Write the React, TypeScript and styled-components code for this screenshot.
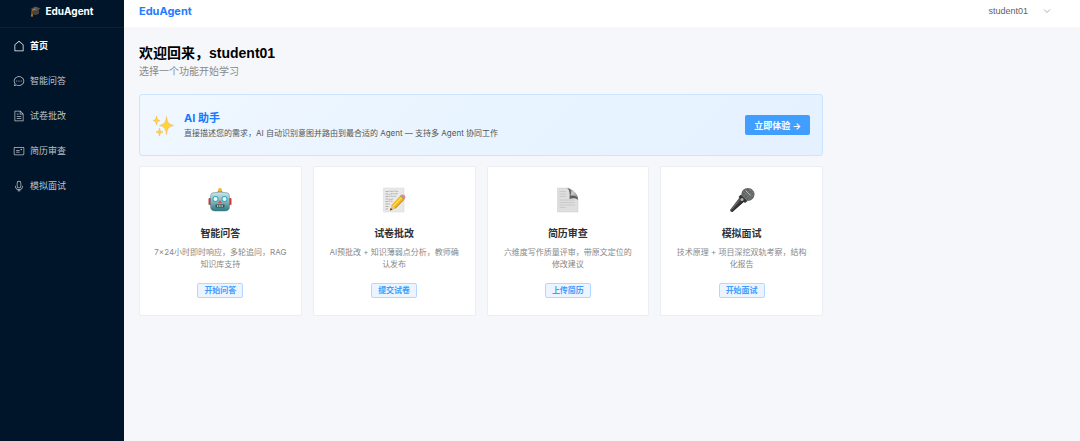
import React from "react";
import styled, { createGlobalStyle, css } from "styled-components";

const GlobalStyle = createGlobalStyle`
  * { box-sizing: border-box; }
  body {
    margin: 0;
    background: #f5f7fa;
    color: #303133;
    font-family: "Liberation Sans", "Noto Sans CJK SC", sans-serif;
  }
  h1, h2, h3, p, ul { margin: 0; padding: 0; }
  button { font-family: inherit; cursor: pointer; }
`;

const interFont = css`
  font-family: Inter, "Noto Sans CJK SC", sans-serif;
`;

const Shell = styled.div`
  display: flex;
  min-height: 100vh;
`;

const Sidebar = styled.aside`
  flex: 0 0 124px;
  background: #001529;
`;

const Logo = styled.div`
  ${interFont}
  display: flex;
  align-items: center;
  justify-content: center;
  gap: 4px;
  height: 28px;
  padding-bottom: 5px;
  border-bottom: 1px solid #0d2133;
  color: #fff;
  font-size: 10px;
  font-weight: 700;
`;

const Menu = styled.ul`
  list-style: none;
`;

const MenuLink = styled.a<{ $active?: boolean }>`
  display: flex;
  align-items: center;
  gap: 5px;
  height: 35px;
  padding: 0 13px;
  color: #bcc4cc;
  font-size: 9px;
  text-decoration: none;
  ${(p) =>
    p.$active &&
    css`
      color: #fff;
      font-weight: 700;
    `}
`;

const MenuIcon = styled.svg`
  width: 12px;
  height: 12px;
  fill: currentColor;
`;

const Body = styled.div`
  flex: 1;
  min-width: 0;
`;

const Header = styled.header`
  display: flex;
  align-items: center;
  justify-content: space-between;
  height: 27px;
  padding: 0 29px 6px 15px;
  background: #fff;
`;

const Brand = styled.strong`
  ${interFont}
  color: #1f7bff;
  font-size: 11px;
`;

const UserButton = styled.button`
  display: flex;
  align-items: center;
  gap: 15px;
  padding: 0;
  border: 0;
  background: none;
  color: #606266;
  font-size: 9px;
`;

const Main = styled.main`
  max-width: 714px;
  padding: 16px 15px;
`;

const Welcome = styled.h1`
  color: #000;
  font-size: 14px;
  line-height: 20px;
`;

const Hint = styled.p`
  margin-bottom: 13px;
  color: #888;
  font-size: 10px;
  line-height: 18px;
`;

const Banner = styled.section`
  display: flex;
  align-items: center;
  gap: 9px;
  height: 62px;
  margin-bottom: 10px;
  padding: 0 12px;
  border: 1px solid #c9e5ff;
  border-radius: 3px;
  background: linear-gradient(135deg, #f0f7ff 0%, #e8f4ff 50%, #e5f1ff 100%);
`;

const BannerText = styled.div`
  ${interFont}
  flex: 1;
`;

const BannerTitle = styled.h2`
  color: #1677ff;
  font-size: 11px;
  line-height: 16px;
`;

const BannerDesc = styled.p`
  color: #555;
  font-size: 8px;
  line-height: 15px;
`;

const PrimaryButton = styled.button`
  && {
    ${interFont}
  }
  height: 20px;
  padding: 0 9px;
  border: 0;
  border-radius: 2px;
  background: #409eff;
  color: #fff;
  font-size: 9px;
  font-weight: 700;
`;

const Grid = styled.div`
  display: grid;
  grid-template-columns: repeat(4, 1fr);
  gap: 11px;
`;

const Card = styled.article`
  display: flex;
  flex-direction: column;
  align-items: center;
  padding: 20px 12px 17px;
  border: 1px solid #ebeef5;
  border-radius: 2px;
  background: #fff;
  text-align: center;
`;

const CardTitle = styled.h3`
  margin: 13px 0 4px;
  font-size: 10px;
  line-height: 16px;
`;

const CardDesc = styled.p`
  ${interFont}
  max-width: 135px;
  margin-bottom: 13px;
  color: #888;
  font-size: 8px;
  line-height: 12px;
`;

const TagButton = styled.button`
  height: 15px;
  padding: 0 6px;
  border: 1px solid #b3d8ff;
  border-radius: 2px;
  background: #ecf5ff;
  color: #409eff;
  font-size: 8px;
  font-weight: 700;
  line-height: 13px;
`;

const HOUSE =
  "M192 413.952V896h640V413.952L512 147.328zM139.52 374.4l352-293.312a32 32 0 0 1 40.96 0l352 293.312A32 32 0 0 1 896 398.976V928a32 32 0 0 1-32 32H160a32 32 0 0 1-32-32V398.976a32 32 0 0 1 11.52-24.576";
const CHAT =
  "m174.72 855.68 135.296-45.12 23.68 11.84C388.096 849.536 448.576 864 512 864c211.84 0 384-166.784 384-352S723.84 160 512 160 128 326.784 128 512c0 69.12 24.96 139.264 70.848 199.232l22.08 28.8-46.272 115.584zm-45.248 82.56A32 32 0 0 1 89.6 896l58.368-145.92C94.72 680.32 64 596.864 64 512 64 299.904 256 96 512 96s448 203.904 448 416-192 416-448 416a461.056 461.056 0 0 1-206.912-48.384zM512 563.2a51.2 51.2 0 1 1 0-102.4 51.2 51.2 0 0 1 0 102.4m192 0a51.2 51.2 0 1 1 0-102.4 51.2 51.2 0 0 1 0 102.4m-384 0a51.2 51.2 0 1 1 0-102.4 51.2 51.2 0 0 1 0 102.4";
const DOCUMENT =
  "M832 384H576V128H192v768h640zm-26.496-64L640 154.496V320zM160 64h480l256 256v608a32 32 0 0 1-32 32H160a32 32 0 0 1-32-32V96a32 32 0 0 1 32-32m160 448h384v64H320zm0-192h160v64H320zm0 384h384v64H320z";
const POSTCARD =
  "M160 224a32 32 0 0 0-32 32v512a32 32 0 0 0 32 32h704a32 32 0 0 0 32-32V256a32 32 0 0 0-32-32zm0-64h704a96 96 0 0 1 96 96v512a96 96 0 0 1-96 96H160a96 96 0 0 1-96-96V256a96 96 0 0 1 96-96M704 320a64 64 0 1 1 0 128 64 64 0 0 1 0-128M288 448h256q32 0 32 32t-32 32H288q-32 0-32-32t32-32m0 128h256q32 0 32 32t-32 32H288q-32 0-32-32t32-32";
const MICROPHONE =
  "M512 128a128 128 0 0 0-128 128v256a128 128 0 1 0 256 0V256a128 128 0 0 0-128-128m0-64a192 192 0 0 1 192 192v256a192 192 0 1 1-384 0V256A192 192 0 0 1 512 64m-32 832v-64a288 288 0 0 1-288-288v-32a32 32 0 0 1 64 0v32a224 224 0 0 0 224 224h64a224 224 0 0 0 224-224v-32a32 32 0 1 1 64 0v32a288 288 0 0 1-288 288v64h64a32 32 0 1 1 0 64H416a32 32 0 1 1 0-64z";

const GraduationCap = () => (
  <svg width="11" height="12" viewBox="0 0 22 24" aria-hidden="true">
    <path d="M6 11v7c3 3 9 2 12-1v-7z" fill="#4a4543" />
    <path d="M1 8 11 3l10 4-9 7z" fill="#5b5452" />
    <path d="m1 8 11 6 9-7" fill="none" stroke="#2d2a2b" strokeWidth="1" />
    <path d="M11 8 4 11v8" fill="none" stroke="#e09a2d" strokeWidth="1.6" />
    <path d="m3 18-1 5h4l-1-5z" fill="#d98d24" />
  </svg>
);

const Sparkles = () => (
  <svg width="23" height="23" viewBox="0 0 46 46" aria-hidden="true">
    <g fill="#ffd43b" stroke="#f5b14c" strokeWidth="1" strokeLinejoin="round">
      <path d="M29 5c1.500 12 4 15 14 18-10 2-12.500 6-14 18-1.500-12-4-16-14-18 10-3 12.500-6 14-18z" />
      <path d="M9 4c.8 6 2 8 7 9-5 1.500-6.200 3-7 9-.8-6-2-7.500-7-9 5-1 6.200-3 7-9z" />
      <path d="M15 28c.8 5 2 7 7 8-5 1.500-6.200 3-7 8-.8-5-2-6.500-7-8 5-1 6.200-3 7-8z" />
    </g>
  </svg>
);

const Robot = () => (
  <svg width="26" height="26" viewBox="0 0 52 52" aria-hidden="true">
    <defs>
      <linearGradient id="robot-face" x1="0" y1="0" x2="0" y2="1">
        <stop offset="0" stopColor="#d3e6e4" />
        <stop offset=".5" stopColor="#86b5b8" />
        <stop offset="1" stopColor="#2d7681" />
      </linearGradient>
    </defs>
    <rect x="3" y="22" width="6" height="14" rx="2" fill="#c63f3e" />
    <rect x="43" y="22" width="6" height="14" rx="2" fill="#c63f3e" />
    <path d="M20 12c0-3 3-4 6-4s6 1 6 4z" fill="#735daa" />
    <circle cx="26" cy="6" r="4" fill="#f5b730" />
    <path d="M10 12q16-4 32 0 3 2 3 9v18q0 9-9 9H16q-9 0-9-9V21q0-7 3-9z" fill="url(#robot-face)" stroke="#498188" />
    <circle cx="17" cy="24" r="6" fill="#2ba9c9" />
    <circle cx="35" cy="24" r="6" fill="#2ba9c9" />
    <circle cx="17" cy="24" r="4" fill="#e9ffff" />
    <circle cx="35" cy="24" r="4" fill="#e9ffff" />
    <path d="m26 26 4 6h-8z" fill="#e2523f" />
    <rect x="17" y="35" width="18" height="6" rx="2" fill="#334d55" />
    <path d="M20 38h12" stroke="#e7eded" strokeWidth="3" strokeDasharray="2 1.500" />
  </svg>
);

const Memo = () => (
  <svg width="26" height="26" viewBox="0 0 52 52" aria-hidden="true">
    <path d="M5 2h41v48H5z" fill="#e9e9e9" stroke="#d6d6d6" />
    <path
      d="M9 9h7l2-1 4 1 5-1 8 1M9 14h5l2 1 7-2 3 1 7-1M9 19h8l3-1 5 1 6-1M9 24h6l3 1 7-1M9 29h5l2-1 7 1M9 34h10M9 39h7M9 44h6"
      fill="none"
      stroke="#999"
      strokeWidth="1.400"
      strokeDasharray="5 1 3 1"
    />
    <path d="m18 47 4-12L39 17l8 7-18 19z" fill="#f1b71d" />
    <path d="m25 38 17-18" stroke="#ffdc52" strokeWidth="3" />
    <path d="m28 43 18-18" stroke="#c88413" strokeWidth="2" />
    <path d="m18 47 4-12 7 8z" fill="#e6c28f" />
    <path d="m18 47 1.500-5 3.500 3z" fill="#333" />
    <path d="m38 18 2-2 8 7-2 2z" fill="#8d9698" />
    <path d="m40 16 2-1q6-1 7 6l-1 2z" fill="#ef8290" />
  </svg>
);

const Page = () => (
  <svg width="26" height="26" viewBox="0 0 52 52" aria-hidden="true">
    <defs>
      <linearGradient id="page-curl" x1="0" y1="0" x2="1" y2="1">
        <stop offset="0" stopColor="#777" />
        <stop offset=".4" stopColor="#ccc" />
        <stop offset="1" stopColor="#777" />
      </linearGradient>
    </defs>
    <path d="M5 2h23l18 22v26H5z" fill="#dedede" stroke="#cfcfcf" />
    <path d="M23 2c7 2 7 14 6 22 6-2 14-2 17 2 1-9-11-22-23-24z" fill="#5c5c5c" />
    <path d="M29 3c4 4 3 9 2 14 6-1 12 1 15 6 0-8-9-17-17-20z" fill="url(#page-curl)" />
    <path d="M9 9h13M9 14h14M9 19h14M9 26h30M9 31h30M9 36h31M9 41h12" stroke="#c3c3c3" strokeWidth="1.500" />
  </svg>
);

const Mic = () => (
  <svg width="26" height="26" viewBox="0 0 52 52" aria-hidden="true">
    <defs>
      <linearGradient id="mic-body" x1="0" y1="0" x2="1" y2="1">
        <stop offset=".3" stopColor="#686868" />
        <stop offset=".6" stopColor="#262626" />
      </linearGradient>
    </defs>
    <path d="M2 46 24 17l10 9L7 50q-4 1-5-4z" fill="url(#mic-body)" />
    <path d="m24 15 13 13-5 4-13-12z" fill="#343434" />
    <path d="M25 16C24 8 30 2 38 2c7 0 13 6 13 12 0 8-6 14-14 14z" fill="#626566" />
    <path d="m29 9 14 14M34 5l13 13M40 3l9 9M29 19 44 4M33 23 49 9M38 26 50 15" stroke="#898c8d" strokeWidth="1" />
    <path d="m33 7 10 10" stroke="#b8b8b8" strokeWidth="2" />
    <circle cx="26" cy="25" r="3" fill="#b4b4b4" />
    <path d="M5 45 20 27" stroke="#747474" strokeWidth="2" />
  </svg>
);

const menu = [
  { label: "首页", path: HOUSE },
  { label: "智能问答", path: CHAT },
  { label: "试卷批改", path: DOCUMENT },
  { label: "简历审查", path: POSTCARD },
  { label: "模拟面试", path: MICROPHONE },
];

const features = [
  { title: "智能问答", desc: "7×24小时即时响应，多轮追问，RAG知识库支持", action: "开始问答", Icon: Robot },
  { title: "试卷批改", desc: "AI预批改 + 知识薄弱点分析，教师确认发布", action: "提交试卷", Icon: Memo },
  { title: "简历审查", desc: "六维度写作质量评审，带原文定位的修改建议", action: "上传简历", Icon: Page },
  { title: "模拟面试", desc: "技术原理 + 项目深挖双轨考察，结构化报告", action: "开始面试", Icon: Mic },
];

export default function App() {
  return (
    <>
      <GlobalStyle />
      <Shell>
        <Sidebar>
          <Logo>
            <GraduationCap />
            EduAgent
          </Logo>
          <nav>
            <Menu>
              {menu.map((item, i) => (
                <li key={item.label}>
                  <MenuLink href="#" $active={i === 0}>
                    <MenuIcon viewBox="0 0 1024 1024" aria-hidden="true">
                      <path d={item.path} />
                    </MenuIcon>
                    {item.label}
                  </MenuLink>
                </li>
              ))}
            </Menu>
          </nav>
        </Sidebar>
        <Body>
          <Header>
            <Brand>EduAgent</Brand>
            <UserButton type="button">
              student01
              <svg width="8" height="8" viewBox="0 0 16 16" fill="none" stroke="#909399" strokeWidth="1.500" aria-hidden="true">
                <path d="m2 5 6 6 6-6" />
              </svg>
            </UserButton>
          </Header>
          <Main>
            <Welcome>欢迎回来，student01</Welcome>
            <Hint>选择一个功能开始学习</Hint>
            <Banner>
              <Sparkles />
              <BannerText>
                <BannerTitle>AI 助手</BannerTitle>
                <BannerDesc>直接描述您的需求，AI 自动识别意图并路由到最合适的 Agent — 支持多 Agent 协同工作</BannerDesc>
              </BannerText>
              <PrimaryButton type="button">立即体验 →</PrimaryButton>
            </Banner>
            <Grid>
              {features.map(({ title, desc, action, Icon }) => (
                <Card key={title}>
                  <Icon />
                  <CardTitle>{title}</CardTitle>
                  <CardDesc>{desc}</CardDesc>
                  <TagButton type="button">{action}</TagButton>
                </Card>
              ))}
            </Grid>
          </Main>
        </Body>
      </Shell>
    </>
  );
}
